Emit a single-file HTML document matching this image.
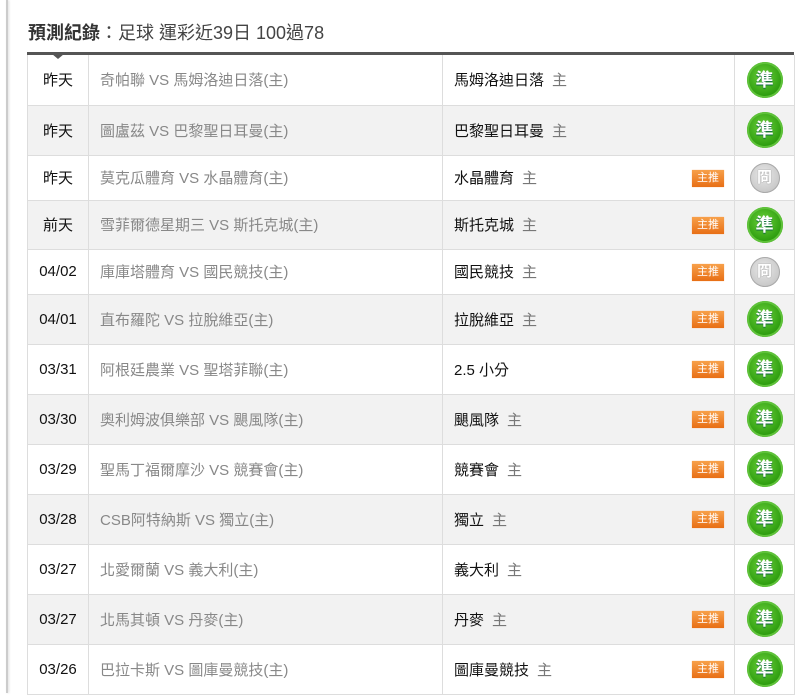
<!DOCTYPE html>
<html><head><meta charset="utf-8"><style>
body{margin:0;width:805px;height:693px;background:#fff;font-family:"Liberation Sans","Noto Sans CJK TC",sans-serif;overflow:hidden;position:relative}
.lb{position:absolute;left:6px;top:0;width:2px;height:693px;background:#ccc;box-shadow:1px 0 2px #ddd}
.title{position:absolute;left:28px;top:19px;font-size:18px;color:#444}
.title b{color:#333}
.tl{position:absolute;left:27px;top:52px;width:767px;height:3px;background:#555}
.arr{position:absolute;left:52px;top:54px;width:0;height:0;border-left:6px solid transparent;border-right:6px solid transparent;border-top:5px solid #555}
table{position:absolute;left:27px;top:55px;width:767px;border-collapse:collapse;font-size:15px;table-layout:fixed}
td{border:1px solid #ddd;border-top:none;padding:0}
tr.g td{background:#f2f2f2}
td.d{text-align:center;color:#111}
td.m{color:#888;padding-left:11px}
td.p{color:#111;padding-left:11px;position:relative}
td.p span{color:#777;margin-left:8px}
td.r{text-align:center;border-right:1px solid #ddd}
.bd{position:absolute;right:10px;top:50%;margin-top:-8px;width:32px;height:17px;background:linear-gradient(#f7a04a,#e86f15);color:#fff;font-size:11px;line-height:17px;text-align:center;box-shadow:0 0 1px #fb8}
.c{display:inline-block;width:36px;height:36px;border-radius:50%;background:radial-gradient(circle at 45% 40%,#6bd13b,#2a9a0c 70%,#1d7a06);color:#fff;font-weight:bold;font-size:18px;line-height:36px;text-align:center;vertical-align:middle;box-shadow:0 0 0 2px #5fc23a inset;text-shadow:0 1px 1px #164}
.c.x{width:30px;height:30px;line-height:30px;background:radial-gradient(circle at 45% 40%,#e8e8e8,#bbb);box-shadow:0 0 0 1px #aaa inset;color:#fff;font-size:15px;text-shadow:0 0 1px #777}
</style></head><body>
<div class="lb"></div>
<div class="title"><b>預測紀錄</b>：足球 運彩近39日 100過78</div>
<div class="tl"></div><div class="arr"></div>
<table>
<colgroup><col style="width:61px"><col style="width:354px"><col style="width:292px"><col style="width:60px"></colgroup>
<tr style="height:50px"><td class="d">昨天</td><td class="m">奇帕聯 VS 馬姆洛迪日落(主)</td><td class="p">馬姆洛迪日落<span>主</span></td><td class="r"><span class="c">準</span></td></tr>
<tr class="g" style="height:50px"><td class="d">昨天</td><td class="m">圖盧茲 VS 巴黎聖日耳曼(主)</td><td class="p">巴黎聖日耳曼<span>主</span></td><td class="r"><span class="c">準</span></td></tr>
<tr style="height:45px"><td class="d">昨天</td><td class="m">莫克瓜體育 VS 水晶體育(主)</td><td class="p">水晶體育<span>主</span><div class="bd">主推</div></td><td class="r"><span class="c x">冏</span></td></tr>
<tr class="g" style="height:49px"><td class="d">前天</td><td class="m">雪菲爾德星期三 VS 斯托克城(主)</td><td class="p">斯托克城<span>主</span><div class="bd">主推</div></td><td class="r"><span class="c">準</span></td></tr>
<tr style="height:45px"><td class="d">04/02</td><td class="m">庫庫塔體育 VS 國民競技(主)</td><td class="p">國民競技<span>主</span><div class="bd">主推</div></td><td class="r"><span class="c x">冏</span></td></tr>
<tr class="g" style="height:50px"><td class="d">04/01</td><td class="m">直布羅陀 VS 拉脫維亞(主)</td><td class="p">拉脫維亞<span>主</span><div class="bd">主推</div></td><td class="r"><span class="c">準</span></td></tr>
<tr style="height:50px"><td class="d">03/31</td><td class="m">阿根廷農業 VS 聖塔菲聯(主)</td><td class="p">2.5 小分<div class="bd">主推</div></td><td class="r"><span class="c">準</span></td></tr>
<tr class="g" style="height:50px"><td class="d">03/30</td><td class="m">奧利姆波俱樂部 VS 颶風隊(主)</td><td class="p">颶風隊<span>主</span><div class="bd">主推</div></td><td class="r"><span class="c">準</span></td></tr>
<tr style="height:50px"><td class="d">03/29</td><td class="m">聖馬丁福爾摩沙 VS 競賽會(主)</td><td class="p">競賽會<span>主</span><div class="bd">主推</div></td><td class="r"><span class="c">準</span></td></tr>
<tr class="g" style="height:50px"><td class="d">03/28</td><td class="m">CSB阿特納斯 VS 獨立(主)</td><td class="p">獨立<span>主</span><div class="bd">主推</div></td><td class="r"><span class="c">準</span></td></tr>
<tr style="height:50px"><td class="d">03/27</td><td class="m">北愛爾蘭 VS 義大利(主)</td><td class="p">義大利<span>主</span></td><td class="r"><span class="c">準</span></td></tr>
<tr class="g" style="height:50px"><td class="d">03/27</td><td class="m">北馬其頓 VS 丹麥(主)</td><td class="p">丹麥<span>主</span><div class="bd">主推</div></td><td class="r"><span class="c">準</span></td></tr>
<tr style="height:50px"><td class="d">03/26</td><td class="m">巴拉卡斯 VS 圖庫曼競技(主)</td><td class="p">圖庫曼競技<span>主</span><div class="bd">主推</div></td><td class="r"><span class="c">準</span></td></tr>
</table>
</body></html>
